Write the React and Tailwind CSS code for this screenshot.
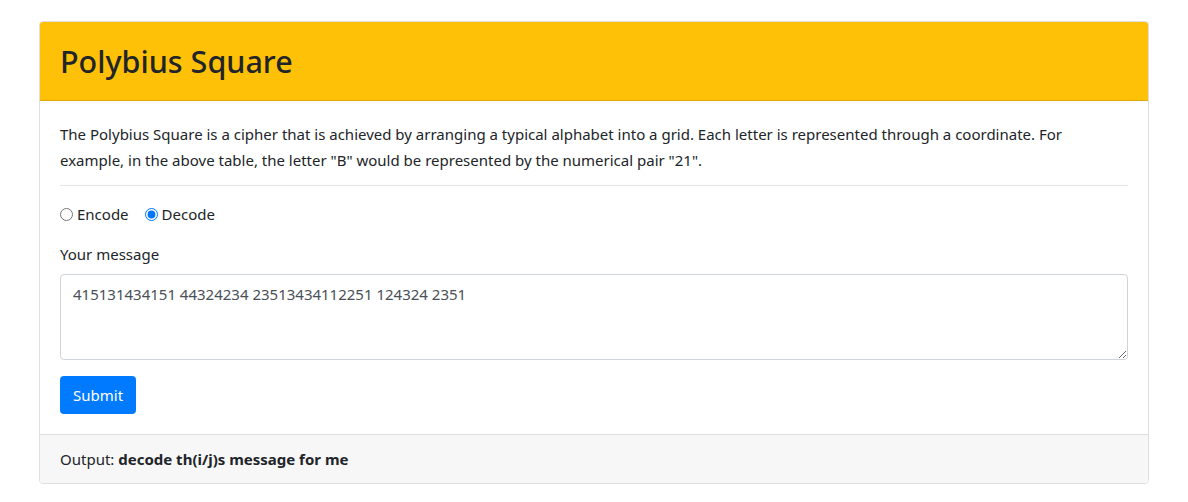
import { useState } from "react";

export default function App() {
  const [mode, setMode] = useState("decode");
  const [message, setMessage] = useState("415131434151 44324234 23513434112251 124324 2351");

  return (
    <div className="min-h-screen bg-white font-['Noto_Sans',sans-serif] text-[#212529]">
      <div className="mx-auto w-[1110px] pt-[21px]">
        <div className="overflow-hidden rounded border border-[#dfdfdf]">
          {/* header */}
          <div className="border-b border-[#e0aa06] bg-[#ffc107] px-5 py-5">
            <h2 className="text-[30.5px] font-medium leading-[38px]">Polybius Square</h2>
          </div>

          {/* body */}
          <div className="p-5">
            <p className="text-[15px] leading-[26px]">
              The Polybius Square is a cipher that is achieved by arranging a typical alphabet into a grid. Each
              letter is represented through a coordinate. For example, in the above table, the letter "B" would be
              represented by the numerical pair "21".
            </p>
            <hr className="mt-3 mb-4 border-[#e5e5e5]" />

            <div className="flex items-center gap-4 text-[15px] leading-6">
              {["Encode", "Decode"].map((m) => (
                <label key={m} className="flex items-center gap-1">
                  <input
                    type="radio"
                    name="mode"
                    checked={mode === m.toLowerCase()}
                    onChange={() => setMode(m.toLowerCase())}
                    className="m-0 h-[13px] w-[13px] accent-[#0075ff]"
                  />
                  <span>{m}</span>
                </label>
              ))}
            </div>

            <div className="mt-4 text-[15px] leading-6">Your message</div>
            <textarea
              value={message}
              onChange={(e) => setMessage(e.target.value)}
              rows={3}
              className="mt-2 block h-[86px] w-full rounded border border-[#ced4da] px-3 py-[6px] text-[15px] leading-[26px] text-[#495057] outline-none"
            />

            <button
              type="button"
              className="mt-4 h-[38px] rounded bg-[#007bff] px-[13px] text-[15px] text-white"
            >
              Submit
            </button>
          </div>

          {/* footer */}
          <div className="border-t border-[#dfdfdf] bg-[#f7f7f7] px-5 py-3 text-[15px] leading-6">
            Output: <span className="font-bold">decode th(i/j)s message for me</span>
          </div>
        </div>
      </div>
    </div>
  );
}
